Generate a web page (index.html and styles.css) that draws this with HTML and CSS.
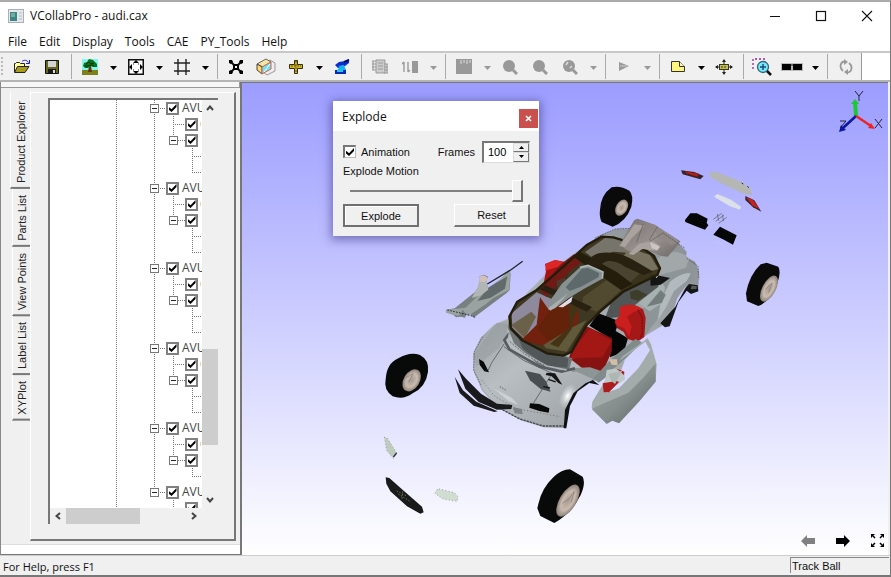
FILE: index.html
```html
<!DOCTYPE html>
<html lang="en">
<head>
<meta charset="utf-8">
<title>VCollabPro - audi.cax</title>
<link rel="stylesheet" href="styles.css">
</head>
<body>
<header class="titlebar">
  <svg class="app-icon" width="16" height="14" viewBox="0 0 16 14"><rect x=".5" y=".5" width="15" height="13" fill="#e4e8ec" stroke="#a9b0b8"/><rect x="2" y="3" width="7" height="9" fill="#3f8585"/><rect x="3" y="4" width="4" height="4" fill="#6db09c"/><path d="M11 4h3M11 7h3M11 10h3" stroke="#b4bcc8"/></svg>
  <h1 class="title">VCollabPro - audi.cax</h1>
  <button class="win-btn" aria-label="Minimize"><svg width="12" height="12"><path d="M1 6.500h10" stroke="#111"/></svg></button>
  <button class="win-btn" aria-label="Maximize"><svg width="12" height="12"><rect x="1.500" y="1.500" width="9" height="9" fill="none" stroke="#111" stroke-width="1.200"/></svg></button>
  <button class="win-btn" aria-label="Close"><svg width="12" height="12"><path d="M1 1l10 10M11 1L1 11" stroke="#111" stroke-width="1.100"/></svg></button>
</header>
<nav class="menubar">
  <button>File</button><button>Edit</button><button>Display</button><button>Tools</button><button>CAE</button><button>PY_Tools</button><button>Help</button>
</nav>
<div class="toolbar-row">
<div class="toolbar" role="toolbar">
  <span class="grip"></span>
  <button class="tool" aria-label="Open"><svg width="18" height="16" viewBox="0 0 18 16"><path d="M1.500 13V4.500h1l1-1h3l1 1h4V7" fill="#ffff9c" stroke="#222"/><path d="M1.500 13.500L4.500 7.500H16L12 13.500Z" fill="#a99a1a" stroke="#222"/><path d="M9 2.500c2-2 5-1.500 6.500 1M16.500 1v3.500H13" fill="none" stroke="#1c1cc0"/></svg></button>
  <button class="tool" aria-label="Save"><svg width="16" height="16"><path d="M1.500 1.500h13v13h-13z" fill="#66661c" stroke="#111"/><path d="M4 2h8v6H4z" fill="#d4d4d4"/><path d="M4 10h8v4H4z" fill="#1a1a1a"/><path d="M9 11h2v3H9z" fill="#ddd"/></svg></button>
  <span class="sep"></span>
  <button class="tool" aria-label="Background"><svg width="16" height="16"><path d="M0 0h16v12H0z" fill="#83f4ee"/><path d="M0 11h16v5H0z" fill="#7a8218"/><path d="M7 7h2l1 6H6z" fill="#6b3410"/><path d="M1 7l1-3 3-1 2-3 4 1 2 2 2 2v3h-4L9 7 6 9H3z" fill="#08721d"/><path d="M4 5l3-2 2 2 3-1M3 7h3l3-1 3 1" stroke="#003908" fill="none"/></svg></button><button class="drop" aria-label="Background options"><svg width="7" height="4"><path d="M0 0h7L3.500 4z"/></svg></button>
  <button class="tool" aria-label="Fit view"><svg width="16" height="16"><rect x=".75" y=".75" width="14.500" height="14.500" fill="#fff" stroke="#111" stroke-width="1.500"/><path d="M8 1l3 3H5zM8 15l3-3H5zM1 8l3-3v6zM15 8l-3-3v6z"/><path d="M5 5h1M10 5h1M5 11h1M10 11h1" stroke="#111"/></svg></button><button class="drop" aria-label="View options"><svg width="7" height="4"><path d="M0 0h7L3.500 4z"/></svg></button>
  <button class="tool" aria-label="Grid"><svg width="16" height="16"><path d="M4 0v16M12 0v16M0 4h16M0 12h16" stroke="#222" stroke-width="1.400"/></svg></button><button class="drop" aria-label="Grid options"><svg width="7" height="4"><path d="M0 0h7L3.500 4z"/></svg></button>
  <span class="sep"></span>
  <button class="tool" aria-label="Explode"><svg width="16" height="16"><path d="M3 3l3 3M13 3l-3 3M3 13l3-3M13 13l-3-3" stroke="#111" stroke-width="2"/><path d="M1 1h3l1 2-2 2-2-1zM15 1h-3l-1 2 2 2 2-1zM1 15h3l1-2-2-2-2 1zM15 15h-3l-1-2 2-2 2 1z"/><path d="M6 5h4v1h1v4h-1v1H6v-1H5V6h1z"/><path d="M7 7h2v2H7z" fill="#f0f0f0"/></svg></button>
  <button class="tool" aria-label="Section"><svg width="20" height="18" viewBox="0 0 20 18"><path d="M7 6l7-4 5 3v8l-8 4-4-3z" fill="#eee" stroke="#999"/><path d="M1 6l9-5 5 3-8 5z" fill="#f3e6a0" stroke="#6a6060"/><path d="M1 6l5 3v7l-5-4z" fill="#ffd56c" stroke="#4a4545"/><path d="M6 9l9-5v7l-9 5z" fill="#6de3f1" stroke="#df5c4c"/><path d="M8 14l6-8" stroke="#fff"/></svg></button>
  <button class="tool" aria-label="Measure"><svg width="16" height="16"><path d="M6.500 1.500h3v4h5v4h-5v5h-3v-5h-5v-4h5z" fill="#d8bd20" stroke="#332a08" /><path d="M3 7h10M8 2v12" stroke="#5d4810" stroke-dasharray="2 1"/></svg></button><button class="drop" aria-label="Measure options"><svg width="7" height="4"><path d="M0 0h7L3.500 4z"/></svg></button>
  <button class="tool" aria-label="Probe"><svg width="18" height="16"><path d="M2 6l4-3 6-1 4-2v4l-4 3-7 2z" fill="#0c2dcc"/><path d="M5 7l6-1 2 5H4l3-3z" fill="#19b4f0"/><path d="M2 11h11v4H2z" fill="#0a28b8"/><path d="M4 11h6v2H4z" fill="#28c4f4"/><path d="M11 3l5-2" stroke="#001068" stroke-width="2"/></svg></button>
  <span class="sep"></span>
  <button class="tool" aria-label="Film" disabled><svg width="18" height="16"><path d="M5 1h9v13H5z" fill="#ccc" stroke="#999"/><path d="M1 2h4M1 5h4M1 8h4M1 11h4M13 5h4M13 8h4M13 11h4M13 14h4M2 2v9M16 5v9M7 4h5M7 7h5M7 10h5" stroke="#999" stroke-width="1.200"/></svg></button>
  <button class="tool" aria-label="Legend" disabled><svg width="16" height="14"><path d="M2 2v10M0 4l2-2M6 2v10M6 12l2-2" stroke="#999" stroke-width="1.400"/><path d="M10 1h6v12h-6z" fill="#999"/></svg></button><button class="drop" aria-label="Legend options" disabled><svg width="7" height="4"><path d="M0 0h7L3.500 4z"/></svg></button>
  <span class="sep"></span>
  <button class="tool" aria-label="Contour" disabled><svg width="16" height="16"><path d="M0 0h16v15H0z" fill="#999"/><path d="M5 1v4M8 1v3M11 1v4M14 1v3" stroke="#ddd"/></svg></button><button class="drop" aria-label="Contour options" disabled><svg width="7" height="4"><path d="M0 0h7L3.500 4z"/></svg></button>
  <button class="tool" aria-label="Find maximum" disabled><svg width="16" height="16"><circle cx="7" cy="7" r="6" fill="#999"/><path d="M11 11l4 4" stroke="#999" stroke-width="3"/></svg></button>
  <button class="tool" aria-label="Find minimum" disabled><svg width="16" height="16"><circle cx="7" cy="7" r="6" fill="#999"/><path d="M11 11l4 4" stroke="#999" stroke-width="3"/></svg></button>
  <button class="tool" aria-label="Hotspots" disabled><svg width="16" height="16"><circle cx="7" cy="7" r="6" fill="#999"/><path d="M4 6l2-3M8 9l2-2" stroke="#ddd" stroke-width="1.500"/><path d="M11 11l4 4" stroke="#999" stroke-width="3"/></svg></button><button class="drop" aria-label="Hotspot options" disabled><svg width="7" height="4"><path d="M0 0h7L3.500 4z"/></svg></button>
  <span class="sep"></span>
  <button class="tool" aria-label="Animate" disabled><svg width="12" height="12"><path d="M1 1l10 4-10 5z" fill="#999"/><path d="M2 5h7" stroke="#ccc"/></svg></button><button class="drop" aria-label="Animation options" disabled><svg width="7" height="4"><path d="M0 0h7L3.500 4z"/></svg></button>
  <span class="sep"></span>
  <button class="tool" aria-label="Note"><svg width="16" height="16"><path d="M1.500 2.500h8l5 5v5h-13z" fill="#fff47c" stroke="#333"/><path d="M9.500 2.500v5h5" fill="#fffbc0" stroke="#333"/></svg></button><button class="drop" aria-label="Note options"><svg width="7" height="4"><path d="M0 0h7L3.500 4z"/></svg></button>
  <button class="tool" aria-label="Pick point"><svg width="18" height="16"><path d="M9 1v4M9 11v4M1 8h4M13 8h4" stroke="#222"/><path d="M9 0l2 3H7zM9 16l2-3H7zM0 8l3-2v4zM18 8l-3-2v4z" fill="#222"/><rect x="4.500" y="5.500" width="9" height="5" fill="#c5c23e" stroke="#333"/><path d="M6 8h6" stroke="#333" stroke-dasharray="2 1"/></svg></button>
  <span class="sep"></span>
  <button class="tool" aria-label="Zoom window"><svg width="20" height="18"><path d="M1 11V1h12v4" fill="none" stroke="#902a95" stroke-width="1.300" stroke-dasharray="2 2"/><circle cx="11" cy="9" r="5.500" fill="#7be8f6" stroke="#2b647d" stroke-width="1.300"/><path d="M8 9h6M11 6v6" stroke="#164a78" stroke-width="1.400"/><path d="M15 13l4 4" stroke="#111" stroke-width="2.500"/></svg></button>
  <button class="tool" aria-label="Stereo"><svg width="22" height="8"><path d="M0 0h22v8H0z" fill="#bbb"/><path d="M1 1h9v6H1zM12 1h9v6h-9z"/><path d="M9 2h4" stroke="#111"/></svg></button><button class="drop" aria-label="Stereo options"><svg width="7" height="4"><path d="M0 0h7L3.500 4z"/></svg></button>
  <span class="sep"></span>
  <button class="tool" aria-label="Refresh" disabled><svg width="14" height="16"><path d="M6 2.500C1 2.500 0 9 4 12M8 13.500c5 0 6-6.500 2-9.500" fill="none" stroke="#999" stroke-width="1.800"/><path d="M5 0l4 3-4 3zM9 10l-4 3 4 3z" fill="#999"/></svg></button>
</div>
</div>

<div class="workspace">
  <aside class="sidebar">
    <div class="dock-grip"></div>
    <div class="dock">
      <div class="tabs" role="tablist">
        <button class="tab active" role="tab">Product Explorer</button>
        <button class="tab" role="tab">Parts List</button>
        <button class="tab" role="tab">View Points</button>
        <button class="tab" role="tab">Label List</button>
        <button class="tab" role="tab">XYPlot</button>
      </div>
      <div class="panel">
        <div class="tree-box">
          <div class="tree">
            <div class="node">
              <div class="row parent"><span class="expander"></span><label><input type="checkbox" checked>AVU</label></div>
              <div class="row leaf"><input type="checkbox" checked aria-label="Part"><i></i></div>
              <div class="row child"><span class="expander"></span><input type="checkbox" checked aria-label="Assembly"></div>
              <div class="row stub"></div><div class="row stub"></div>
            </div>
            <div class="node">
              <div class="row parent"><span class="expander"></span><label><input type="checkbox" checked>AVU</label></div>
              <div class="row leaf"><input type="checkbox" checked aria-label="Part"><i></i></div>
              <div class="row child"><span class="expander"></span><input type="checkbox" checked aria-label="Assembly"></div>
              <div class="row stub"></div><div class="row stub"></div>
            </div>
            <div class="node">
              <div class="row parent"><span class="expander"></span><label><input type="checkbox" checked>AVU</label></div>
              <div class="row leaf"><input type="checkbox" checked aria-label="Part"><i></i></div>
              <div class="row child"><span class="expander"></span><input type="checkbox" checked aria-label="Assembly"></div>
              <div class="row stub"></div><div class="row stub"></div>
            </div>
            <div class="node">
              <div class="row parent"><span class="expander"></span><label><input type="checkbox" checked>AVU</label></div>
              <div class="row leaf"><input type="checkbox" checked aria-label="Part"><i></i></div>
              <div class="row child"><span class="expander"></span><input type="checkbox" checked aria-label="Assembly"></div>
              <div class="row stub"></div><div class="row stub"></div>
            </div>
            <div class="node">
              <div class="row parent"><span class="expander"></span><label><input type="checkbox" checked>AVU</label></div>
              <div class="row leaf"><input type="checkbox" checked aria-label="Part"><i></i></div>
              <div class="row child"><span class="expander"></span><input type="checkbox" checked aria-label="Assembly"></div>
              <div class="row stub"></div>
            </div>
            <div class="node last">
              <div class="row parent"><span class="expander"></span><label><input type="checkbox" checked>AVU</label></div>
              <div class="row leaf"><input type="checkbox" checked aria-label="Part"></div>
            </div>
          </div>
          <div class="vscroll">
            <button aria-label="Scroll up"><svg width="8" height="6"><path d="M1 5l3-3.500L7 5" /></svg></button>
            <div class="vtrack"><span class="vthumb"></span></div>
            <button aria-label="Scroll down"><svg width="8" height="6"><path d="M1 1l3 3.500L7 1" /></svg></button>
          </div>
          <div class="hscroll">
            <button aria-label="Scroll left"><svg width="6" height="8"><path d="M5 1L1.500 4 5 7" /></svg></button>
            <div class="htrack"><span class="hthumb"></span></div>
            <button aria-label="Scroll right"><svg width="6" height="8"><path d="M1 1l3.500 3L1 7" /></svg></button>
          </div>
        </div>
      </div>
    </div>
    <div class="dock-foot"></div>
  </aside>

  <main class="viewport">
    <svg class="scene" viewBox="242 83 646 472" preserveAspectRatio="xMidYMid meet" role="img" aria-label="Exploded car model">
      <defs>
        <linearGradient id="body" x1="0" y1="1" x2="1" y2="0"><stop offset="0" stop-color="#8b9296"/><stop offset=".25" stop-color="#bcc1c5"/><stop offset=".6" stop-color="#a3a9ac"/><stop offset="1" stop-color="#868c8f"/></linearGradient>
        <linearGradient id="hood" x1="0" y1="0" x2=".8" y2="1"><stop offset="0" stop-color="#999fa2"/><stop offset=".45" stop-color="#b9bec3"/><stop offset="1" stop-color="#a0a5a9"/></linearGradient>
        <linearGradient id="door" x1="0" y1="0" x2="1" y2="1"><stop offset="0" stop-color="#a3aaaa"/><stop offset=".55" stop-color="#858e8d"/><stop offset="1" stop-color="#555f5d"/></linearGradient>
        <linearGradient id="wing" x1="0" y1="0" x2="1" y2="1"><stop offset="0" stop-color="#76716f"/><stop offset=".55" stop-color="#99918f"/><stop offset="1" stop-color="#6b6765"/></linearGradient>
        <radialGradient id="rim"><stop offset="0" stop-color="#a89b91"/><stop offset=".6" stop-color="#c9bbb0"/><stop offset="1" stop-color="#8b7f77"/></radialGradient>
        <radialGradient id="shine"><stop offset="0" stop-color="#fff"/><stop offset="1" stop-color="#d6dadd" stop-opacity="0"/></radialGradient>
      </defs>
      <!-- car body, door panels and roof -->
      <g transform="translate(430 210) scale(.33333)">
        <path d="M455 115L510 75 560 56 620 55 745 100 770 125 768 140 795 155 807 185 805 240 765 232 742 264 718 340 700 345 650 375 560 440 490 510 455 505 425 545 405 600 403 654 340 652 270 630 200 590 155 540 130 480 130 430 150 385 190 345 235 325 290 250 350 190Z" fill="url(#body)"/>
        <path d="M765 236l12-14 26 4 2 18-22 8-13-10-25 35-26 72-14 3-14-12 45-50z" fill="#131516"/>
        <path d="M785 227l15 1v9l-18 1z" fill="#55595b"/>
        <path d="M690 140c30-20 65-18 88 6l-18 45-58 42-35 15-30-60z" fill="#a2a8aa"/>
        <path d="M690 195l65-18 45-10-10 42-42 18-38 38-25 60-40 52-20-50 28-60z" fill="#8e9598"/>
        <path d="M720 215c30-22 50-28 62-24l-12 22-38 30-25 50-24 38 10-60z" fill="#b3babd"/>
        <path d="M625 278l70-66 10 22-8 44-38 26z" fill="#a8b1b1"/><path d="M650 290l42-50 15 14-12 25z" fill="#737d7d"/>
        <!-- cabin -->
        <path d="M555 245l75-55 60 10-5 30-70 55-25 35-65 5z" fill="#515555"/>
        <path d="M660 190l32 8 28 6-28 20-30 3z" fill="#151515"/><path d="M672 196h14l-6 8z" fill="#e4e4ff"/>
        <path d="M600 245l22-6 30 15-28 18-22-6z" fill="#3d3d29"/>
        <path d="M505 310l62 23-10 30 37 22-12 40-42 17 3-55-65-40z" fill="#050505"/>
        <path d="M570 292c15-10 45-12 69 6l8 25-4 58-22 15-30-10-10-20-20-12-6-16 16-18z" fill="#a61717"/>
        <path d="M570 292c15-10 45-12 66 6l-25 8-20 14 14 30-8 30-14-25-21-8-8-14 14-14z" fill="#cb1f1f"/><path d="M624 300l12 22 2 45-8 18" stroke="#7c1010" stroke-width="5" fill="none" stroke-dasharray="5 3"/>
        <path d="M345 162l30-12 34 7 6 24-12 70-22-5-40-26 8-42z" fill="#a31412"/>
        <path d="M347 162l28-12 25 7-10 12-27 8-17 5z" fill="#dc2725"/>
        <path d="M462 345l84 40-1 40-30 68-60-20-38-30 14-45z" fill="#861312"/><path d="M480 355l65 37-28 50-80 3-20 10 20-45z" fill="#a31815"/>
        <path d="M240 325l-8 25 20 50 85 75 80 5 10-35-125-40z" fill="#707578"/>
        <path d="M265 385l80 45 70 15-3 28-65-6-68-50z" fill="#52575a"/>
        <path d="M420 475l60-3 40 13-25 28-65-20z" fill="#8d9596"/>
        <path d="M490 505l56-60 70-58 20 10-45 45-65 61-20 15z" fill="#818b8b"/>
        <path d="M537 448h24l2 18-18-2z" fill="#d6bda7"/>
        <!-- glass roof -->
        <path d="M238 320L262 275 320 240 400 170 470 105 515 80 550 82 625 105 672 138 690 175 682 195 580 245 510 305 470 345 425 425 400 437 350 430 275 390 242 355Z" fill="#373018" fill-opacity=".94"/>
        <path d="M245 310l75-63 50 22-15 45-70 75-38-36z" fill="#8f899d"/>
        <path d="M244 345l60-40 14 15-34 65z" fill="#6b6049"/>
        <path d="M330 262l25 35 30-10 65-18-5 65-25 60-50 20-65-15-30-10 45-45z" fill="#71210d"/>
        <path d="M360 300l50-32 28 20-18 60 22 10-35 43-60-15-25-30z" fill="#632209"/>
        <path d="M390 165l42-32 35 13-50 40-68 75-20-20z" fill="#701915"/>
        <path d="M380 212l25-8 12 15-12 25-23-8z" fill="#493b2d"/>
        <path d="M465 126l60-42 45 0 52 22-22 23-50-4-60 20z" fill="#77746b"/>
        <path d="M505 150l90 5 50 20-65 62-85-45z" fill="#4a432f"/>
        <path d="M600 115l60 20 25 42-35 10-75-43z" fill="#777260"/>
        <path d="M460 260l70-50 45 30-75 65-45-17z" fill="#514a30"/>
        <path d="M340 405l90-55 40-20-60 95-62-10z" fill="#60593a"/>
        <path d="M415 270l45 15-25 30-10 42-40 55-25-10 60-50z" fill="#453315"/>
        <path d="M430 140l20-14 110 60 48 36-35 18-100-70z" fill="#241d0b"/>
        <path d="M475 160c5-45 90-38 135-10l60 35-30 10-55-25c-30-20-65-28-80 10z" fill="#282011"/>
        <path d="M330 238l16-12 140 65-15 14z" fill="#282011"/>
        <path d="M238 320L262 275 320 240 400 170 470 105 515 80 550 82 625 105 672 138 690 175 682 195 580 245 510 305 470 345 425 425 400 437 350 430 275 390 242 355Z" fill="none" stroke="#221c0b" stroke-width="7" stroke-linejoin="round"/>
        <path d="M450 172l24-6 45 20-2 20-57 32-42 25-45 33-18 4 5-28 35-50z" fill="#879191"/>
        <path d="M456 176l18-2 34 16-3 12-52 28-34 13-12-11z" fill="#5e696c"/>
        <path d="M450 172l24-6 45 20-2 20" fill="none" stroke="#adb8b9" stroke-width="5"/>
        <path d="M385 291l43-32-4 17-25 16z" fill="#dedee9"/><path d="M355 294l60-44-38 42-16 10z" fill="#aab0b0"/>
        <!-- rear wing -->
        <path d="M577 90l36-60 10-4 52 18 76 50-10 15-28 31-20-2-55-25-38 12-20-12z" fill="url(#wing)"/>
        <path d="M568 108l45-65 30 4-38 38-20 27zM610 135l-14-3 30-30 42-10 25 18-13 12-43-5z" fill="#aaa29f"/>
        <path d="M672 44l76 50-22 12-44-24z" fill="#8f8886"/>
        <path d="M640 42l-20 55M682 50l-24 40M700 68l-42 28" stroke="#605a59" stroke-width="2"/><path d="M660 96l28 13-5 12-18-6z" fill="#cbc6c3"/>
        <!-- hood and nose -->
        <path d="M235 330L200 340 155 380 130 430 132 490 160 540 200 588 275 630 340 651 402 653 405 605 432 555 465 520 490 508 440 485 370 490 280 445 225 395Z" fill="url(#hood)"/>
        <path d="M200 340l35 2-2 32-28 42-65 52-8-35z" fill="#92989c" opacity=".45"/>
        <path d="M222 402l-38 58-10 22M222 410l60 42 85 38-57 90" fill="none" stroke="#404548" stroke-width="2"/>
        <path d="M238 370l-15 20 15 28 92 52 65 15 40-10" fill="none" stroke="#565c61" stroke-width="8"/>
        <path d="M238 370l-3 22 45 38 70 38 60 12" fill="none" stroke="#aeb5b9" stroke-width="5"/><path d="M240 395l45 38 60 34" fill="none" stroke="#222" stroke-width="1.500" stroke-dasharray="5 5"/>
        <path d="M285 482l45 10 18 22 14 31-30-8-32-26z" fill="#484e51"/><path d="M350 488l25 2 22 34-12-5-20-20-18-4z" fill="#131516"/><path d="M355 508l22 8M340 530l20 4" stroke="#131516" stroke-width="4"/>
        <path d="M147 447l14 8 16 32-14-3-14-20zM300 580l28 2 30 13-2 13-28-5-30-10z" fill="#080909"/>
        <ellipse cx="413" cy="558" rx="22" ry="40" fill="url(#shine)" transform="rotate(25 413 558)"/>
        <path d="M155 510l40 50 65 36 130 24" fill="none" stroke="#4c5256" stroke-width="2" stroke-dasharray="3 7"/>
        <path d="M190 535l55 28 20 22-30-12z" fill="#cbd0d3"/><path d="M248 592l28 5 2 16-24-3z" fill="#7c8285"/>
        <path d="M210 530l20 12" stroke="#222" stroke-width="2" stroke-dasharray="4 4"/>
        <path d="M508 525l-30-6-35 25-23 44-11 67h-8l4-55 25-50 36-30 22-10z" fill="#101112"/>
        <path d="M200 590l70 37 70 21h62" fill="none" stroke="#40464a" stroke-width="4" stroke-dasharray="7 3"/>
        <path d="M158 380l-25 45-2 55 22 45M495 84l60-27 45-2M700 70l65 45M770 145l34 23 3 40" fill="none" stroke="#42494b" stroke-width="2" stroke-dasharray="5 3"/>
        <!-- front bumper strips -->
        <path d="M84 478l24 28 45 45 48 30 46 4-3 12-43 2-55-23-40-40zM74 500l25 41 40 34 64 29-10 2-62-19-42-38z" fill="#181a1b"/>
        <!-- left door -->
        <path d="M47 300l27-5 62-50 10-17 6-22-4-7 15-5 12 7-7 10 6 23 68-46-3 52-10 10-98 73-18-20-8 20-12-3-15 2-14-13z" fill="#788080"/>
        <path d="M47 300l60-7 45-44 44-27 45-45-3 62-48 25-25 20-52 35-15-20-10 18-18-2-22-7z" fill="#9ba3a2"/>
        <path d="M174 234l58-35-7 37-43 27-40 10z" fill="#626b6b"/><path d="M150 197l18 2 7 40-22 17-28 8 18-32z" fill="#b1b5b3"/><path d="M149 200l13-4 12 8-10 13-14-3z" fill="#d1c1b8"/>
        <path d="M172 222l70-42 36-26" stroke="#1f2628" stroke-width="4" fill="none"/><path d="M52 300l65 15 22 8" stroke="#252d2d" stroke-width="3" stroke-dasharray="5 4" fill="none"/>
        <!-- right door -->
        <path d="M653 385l10 18 17 60-3 50-50 60-60 65-20-8-17 10-45-47 2-18 58-95 40-31-18 50-40 50 40-14 58-60 35-54-14-26-50 38-28 20 10-15 55-38z" fill="#a3acab"/>
        <path d="M677 460v55l-50 60-60 65-20-8-17 10-45-45 30-14 80-35 45-45z" fill="url(#door)"/>
        <path d="M530 480l33-5 20 15 2 18-48 35-15-9z" fill="#c0c7c7"/><path d="M518 520l42-7 7 3-30 31h-16zM558 475l25 10-1 10z" fill="#aa1d1c"/><path d="M535 492l42-10-22 40-10-8z" fill="#aeb7b5"/>
      </g>
      <!-- front wheels, grille and lamps -->
      <g transform="translate(370 340) scale(.33333)">
        <path d="M47 118Q50 70 85 55 120 34 150 45 178 60 174 95 168 140 128 160 100 181 68 169 40 150 47 118Z" fill="#080a0a"/><ellipse cx="125" cy="121" rx="24" ry="36" transform="rotate(31 125 121)" fill="url(#rim)"/><path d="M108 113l22-12-14 26" stroke="#82776f" stroke-width="2" fill="none"/>
        <path d="M505 492Q515 445 550 412 575 388 600 388L638 410Q648 430 632 465 605 520 553 549L511 528 502 505z" fill="#080a0a"/><ellipse cx="594" cy="482" rx="25" ry="54" transform="rotate(31 594 482)" fill="url(#rim)"/><path d="M578 490l20-14 15-22-10 34" stroke="#82776f" stroke-width="2" fill="none"/>
        <path d="M47 412l11 2 38 34 60 52 5 17-10 4-40-22-50-45-12-23z" fill="#191b1b"/><path d="M80 453l30 15M85 462l35 22M98 454l-2 24" stroke="#786f55" stroke-width="3" stroke-dasharray="4 5"/>
        <path d="M43 292l9 2 28 45-10 16-20-23z" fill="#bdcbbd"/><path d="M43 292l9 2 28 45-10 16-20-23z" fill="none" stroke="#68736a" stroke-width="2" stroke-dasharray="2 8"/><path d="M80 339l-10 12" stroke="#334" stroke-width="4"/>
        <path d="M195 460l8-14 50 12 11 12-3 14-42-7z" fill="#d0ddd0" stroke="#68736a" stroke-width="2" stroke-dasharray="3 7"/>
      </g>
      <!-- rear wheels, lamps and vents -->
      <g transform="translate(590 160) scale(.33333)">
        <path d="M30 150Q32 105 65 82 90 75 118 92 132 105 124 140 108 185 68 200L35 186Q27 170 30 150z" fill="#0a0a0b"/><ellipse cx="95" cy="143" rx="17" ry="26" transform="rotate(30 95 143)" fill="url(#rim)"/>
        <path d="M468 400Q478 345 512 313L530 308 565 320Q574 335 562 370 540 425 505 438L471 424z" fill="#0a0a0b"/><ellipse cx="537" cy="386" rx="20" ry="43" transform="rotate(28 537 386)" fill="url(#rim)"/><path d="M526 388l20-18-10 28" stroke="#82776f" stroke-width="2" fill="none"/>
        <path d="M273 31l40 5 28 12-10 10-53-15z" fill="#352522"/><path d="M285 34l42 7-5 9-34-10z" fill="#b01c18"/>
        <path d="M357 36l25 1 58 22 42 25 4 22-30-7-57-26-38-22z" fill="#b4b7b4"/><path d="M455 69l5 3M472 79l5 4" stroke="#333" stroke-width="3"/>
        <path d="M466 108l27 13 21 34-25-13-23-22z" fill="#3a2826"/><path d="M468 111l22 10 18 26-20-10z" fill="#c62320"/>
        <path d="M372 110l10-8 42 18 29 20-3 9-30-10z" fill="#dce1e8"/>
        <path d="M285 180l16-20 20 0 32 16-3 12 5 8-10 13-22-8-37-15z" fill="#050607"/><path d="M370 224l20-24 50 26-4 10-7 18-30-16z" fill="#050607"/>
        <path d="M370 178l25-18M377 184l25-19M386 190l24-18M382 162l4 20M398 164l2 20" stroke="#666b78" stroke-width="2.500" fill="none"/>
        <path d="M375 244l20 9M395 252l18 18M425 265l15 7" stroke="#c5c8ef" stroke-width="2"/>
      </g>
    </svg>
    <svg class="axis" width="50" height="48" viewBox="0 0 50 48" role="img" aria-label="Axis triad"><path d="M20 26L19 12" stroke="#1bca30" stroke-width="4"/><path d="M15 14l4-5 4 5z" fill="#1bca30"/><path d="M20 26l-13 12" stroke="#0a16a5" stroke-width="2.500"/><path d="M3 42l2-7 5 5z" fill="#0a16a5"/><path d="M20 26l15 10" stroke="#ef2222" stroke-width="2.500"/><path d="M39 39l-7-1 3-5z" fill="#ef2222"/><path d="M19 1l4 5 4-5M23 6v5M39 29l7 9M46 29l-7 9M4 31h6l-6 7" fill="none" stroke="#242437"/></svg>
    <section class="dialog" aria-labelledby="dialog-title">
      <div class="dialog-head"><h2 id="dialog-title">Explode</h2><button class="dialog-close" aria-label="Close dialog"><svg width="7" height="7"><path d="M1 1l5 5M6 1L1 6" stroke="#fff" stroke-width="1.600"/></svg></button></div>
      <div class="dialog-body">
        <div class="options">
          <label class="check"><input type="checkbox" checked>Animation</label>
          <label class="frames-label" for="frames">Frames</label>
          <div class="spin"><input id="frames" type="text" value="100"><div class="steps"><button aria-label="Increase"><svg width="5" height="3"><path d="M0 3l2.500-3L5 3z"/></svg></button><button aria-label="Decrease"><svg width="5" height="3"><path d="M0 0l2.500 3L5 0z"/></svg></button></div></div>
        </div>
        <label class="motion" for="motion">Explode Motion</label>
        <input class="slider" id="motion" type="range" min="0" max="100" value="100">
        <div class="actions"><button class="default">Explode</button><button>Reset</button></div>
      </div>
    </section>
    <div class="view-nav">
      <button aria-label="Previous view"><svg width="14" height="12"><path d="M0 6l6-6v3h8v6H6v3z" fill="#808080"/></svg></button>
      <button aria-label="Next view"><svg width="14" height="12"><path d="M14 6L8 0v3H0v6h8v3z"/></svg></button>
      <button aria-label="Full screen"><svg width="13" height="13"><path d="M0 0h4L0 4zM13 0v4L9 0zM0 13V9l4 4zM13 13H9l4-4z"/><path d="M2 2l2 2M11 2L9 4M2 11l2-2M11 11L9 9" stroke="#000" stroke-width="1.500"/></svg></button>
    </div>
  </main>
</div>
<footer class="statusbar"><span class="help">For Help, press F1</span><span class="mode">Track Ball</span></footer>
</body>
</html>
```
FILE: styles.css
```css
* { box-sizing: border-box; }
body {
  margin: 0;
  height: 100vh;
  display: flex;
  flex-direction: column;
  overflow: hidden;
  background: #f0f0f0;
  border-top: 2px solid #aaa;
  border-right: 1px solid #777;
  border-bottom: 2px solid #777;
  font: 12px/16px "Open Sans", sans-serif;
  color: #111;
}
button { border: 0; padding: 0; margin: 0; background: none; font: inherit; color: inherit; }
svg { display: block; }
h1, h2 { margin: 0; font: inherit; }

.titlebar { display: flex; align-items: center; height: 28px; padding-left: 8px; background: #fff; }
.title { margin-left: 6px; flex: 1; }
.win-btn { width: 46px; height: 28px; display: grid; place-items: center; }

.menubar { display: flex; gap: 12px; height: 21px; padding: 2px 8px 0; background: #fff; }
.menubar button { line-height: 18px; }

.toolbar-row { flex: none; background: #fff; border-top: 2px solid #c8c8c8; border-bottom: 2px solid #b4b4b4; }
.toolbar { display: flex; width: max-content; height: 27px; background: #f0f0f0; border-right: 1px solid #999; }
.grip { width: 7px; margin: 3px 0; background: radial-gradient(circle, #bbb 1px, transparent 1px) 0 0 / 4px 4px repeat-y; }
.tool { width: 30px; display: grid; place-items: center; }
.drop { width: 16px; display: grid; place-items: center; padding-top: 3px; }
.drop:disabled { fill: #999; }
.sep { width: 8px; margin: 1px 0; background: linear-gradient(#aaa, #aaa) 4px 0 / 1px 100% no-repeat; }

.workspace { display: flex; flex: 1; min-height: 0; }
.sidebar { width: 240px; flex: none; display: flex; flex-direction: column; background: #f0f0f0; border-left: 1px solid #888; }
.dock-grip { height: 6px; border-bottom: 1px solid #999; background: #f6f6f6; border-right: 1px solid #999; }
.dock { display: flex; flex: 1; min-height: 0; padding: 4px 4px 3px 9px; }
.tabs { display: flex; flex-direction: column; align-items: flex-end; width: 20px; flex: none; }
.tab {
  writing-mode: vertical-rl;
  transform: rotate(180deg);
  width: 18px;
  padding: 4px 0 6px;
  font: 11px/16px "Liberation Sans", sans-serif;
  color: #222;
  border-top: 2px solid #777;
  border-right: 1px solid #fff;
}
.tab.active { width: 20px; padding-bottom: 9px; }
.panel { flex: 1; min-width: 0; padding: 5px 16px 15px 17px; border: 1px solid #fff; border-right: 2px solid #777; border-bottom: 2px solid #777; }
.dock-foot { height: 11px; background: #fff; border-top: 1px solid #ddd; border-bottom: 1px solid #777; }

.tree-box { height: 100%; display: grid; grid-template-columns: minmax(0, 1fr) 16px; grid-template-rows: minmax(0, 1fr) 16px; background: #fff; border-left: 2px solid #777; border-top: 2px solid #777; }
.tree {
  overflow: hidden;
  background: repeating-linear-gradient(#777 0 1px, transparent 1px 2px) 66px 0 / 1px 100% no-repeat;
}
.node {
  --dots: repeating-linear-gradient(#777 0 1px, transparent 1px 2px);
  background:
    var(--dots) 104px 0 / 1px 100% no-repeat,
    var(--dots) 123px 8px / 1px 32px no-repeat,
    var(--dots) 142px 40px / 1px calc(100% - 48px) no-repeat;
}
.node.last { background: var(--dots) 104px 0 / 1px 8px no-repeat, var(--dots) 123px 8px / 1px 24px no-repeat; }
.row {
  --dash: repeating-linear-gradient(90deg, #777 0 1px, transparent 1px 2px);
  display: flex;
  align-items: center;
  height: 16px;
  font: 12px/16px "Open Sans", sans-serif;
  color: #444;
  white-space: nowrap;
}
.row label { display: flex; align-items: center; gap: 3px; }
.row.parent { padding-left: 100px; background: var(--dash) 108px 8px / 8px 1px no-repeat; }
.row.child { padding-left: 119px; background: var(--dash) 128px 8px / 7px 1px no-repeat; }
.row.leaf { padding-left: 135px; background: var(--dash) 123px 8px / 12px 1px no-repeat; }
.row.stub { background: var(--dash) 142px 8px / 10px 1px no-repeat; }
.row.leaf i { width: 1px; height: 4px; margin-left: 2px; background: #ead9a0; }
.expander { flex: none; width: 9px; height: 9px; margin-right: 7px; border: 1px solid #777; background: linear-gradient(#222, #222) 1px 3px / 5px 1px no-repeat #fff; }
input[type="checkbox"] { appearance: none; width: 13px; height: 13px; margin: 0; flex: none; display: grid; place-items: center; background: #fff; border: 2px solid #808080; }
input[type="checkbox"]:checked::before { content: ""; width: 8px; height: 8px; background: #000; clip-path: polygon(0 35%, 38% 65%, 100% 0, 100% 38%, 38% 100%, 0 70%); }

.vscroll, .hscroll { display: flex; background: #f0f0f0; }
.vscroll { flex-direction: column; }
.hscroll { grid-column: 1 / 3; padding-right: 16px; }
.vscroll button, .hscroll button { width: 16px; height: 16px; flex: none; display: grid; place-items: center; }
.vscroll path, .hscroll path { fill: none; stroke: #444; stroke-width: 2; }
.vtrack, .htrack { flex: 1; display: flex; min-width: 0; min-height: 0; }
.vtrack { flex-direction: column; align-items: stretch; }
.vtrack::before { content: ""; flex: 232 0 0; }
.vthumb { flex: 96 0 0; background: #cdcdcd; }
.vtrack::after { content: ""; flex: 47 0 0; }
.hthumb { width: 62%; background: #cdcdcd; }

.viewport { position: relative; flex: 1; min-width: 0; margin-right: 2px; overflow: hidden; border-left: 2px solid #777; border-top: 1px solid #777; background: linear-gradient(#9b9cff, #fff); }
.scene { width: 100%; height: 100%; }
.axis { position: absolute; top: 7px; right: 2px; }
.view-nav { position: absolute; right: 4px; bottom: 8px; display: flex; gap: 21px; align-items: center; }

.dialog { position: absolute; left: 91px; top: 18px; width: 206px; background: #f0f0f0; box-shadow: 0 2px 9px 2px rgba(50, 40, 120, .5); }
.dialog-head { display: flex; justify-content: space-between; height: 30px; padding: 8px 1px 0 9px; background: #fff; }
.dialog-close { width: 19px; height: 19px; display: grid; place-items: center; background: #c9504c; }
.dialog-body { padding: 9px 9px 9px 10px; font: 11px/14px "Liberation Sans", sans-serif; }
.options { display: flex; align-items: center; height: 23px; }
.check { display: flex; align-items: center; gap: 5px; flex: 1; }
.check input[type="checkbox"] { border: 1px solid #bbb; border-top: 2px solid #777; border-left: 2px solid #777; }
.frames-label { margin-right: 7px; }
.spin { display: flex; width: 48px; height: 22px; background: #fff; border: 1px solid #ddd; border-left: 2px solid #777; border-top: 2px solid #777; }
.spin input { width: 29px; min-width: 0; padding: 0 0 0 4px; border: 0; font: inherit; background: transparent; }
.steps { display: flex; flex: 1; flex-direction: column; }
.steps button { flex: 1; display: grid; place-items: center; background: #f0f0f0; border: 1px solid #ddd; border-right-color: #777; border-bottom-color: #777; }
.motion { display: block; line-height: 16px; }
.slider { appearance: none; display: block; width: 173px; height: 22px; margin: 1px 0 2px 7px; background: linear-gradient(#808080, #808080) 0 10px / 100% 2px no-repeat; }
.slider::-webkit-slider-thumb { appearance: none; width: 11px; height: 22px; background: #f0f0f0; border: 1px solid #fff; border-right: 2px solid #777; border-bottom: 2px solid #777; }
.actions { display: flex; justify-content: space-between; }
.actions button { width: 76px; height: 23px; border: 1px solid #fff; border-right: 2px solid #777; border-bottom: 2px solid #777; }
.actions .default { border: 2px solid #707070; box-shadow: inset 1px 1px #fff; }

.statusbar { display: flex; flex: none; height: 20px; background: #f0f0f0; border-top: 1px solid #ccc; }
.help { flex: 1; padding: 3px; font-size: 11px; }
.mode { width: 99px; margin: 1px 1px 2px; border-left: 1px solid #888; border-top: 1px solid #888; font: 11px/16px "Liberation Sans", sans-serif; padding-left: 1px; }
```
